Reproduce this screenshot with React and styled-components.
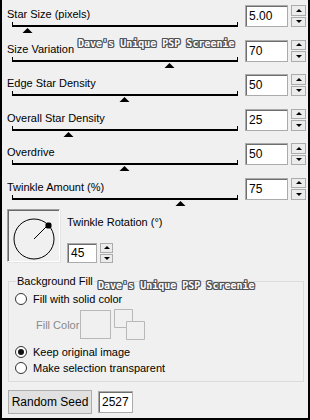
import styled, { createGlobalStyle } from 'styled-components'

const GlobalStyle = createGlobalStyle`
    body {
        margin: 0;
        background: #f0f0f0;
        font-family: "Liberation Sans", Arial, sans-serif;
        font-size: 11px;
        color: #000;
    }
`

const Frame = styled.div`
    position: relative;
    width: 310px;
    height: 420px;
    box-sizing: border-box;
    border: 2px solid #000;
    border-top: none;
    background: #f0f0f0;
    padding-top: 5px;
    overflow: hidden;
`

const SliderRow = styled.div`
    display: grid;
    grid-template-columns: 235px 43px 15px;
    column-gap: 3px;
    height: 34.5px;
    padding-left: 5px;
`

const LeftCol = styled.div`
    display: flex;
    flex-direction: column;
`

const Label = styled.div`
    line-height: 14px;
    margin-top: 2px;
    white-space: nowrap;
`

const Track = styled.div`
    position: relative;
    margin-left: 5px;
    margin-top: 1px;
    width: 224px;
    height: 3px;
    border-left: 1px solid #000;
    border-right: 1px solid #000;
    border-bottom: 2px solid #000;
`

const Thumb = styled.div`
    position: absolute;
    top: 6px;
    width: 0;
    height: 0;
    border-left: 5.5px solid transparent;
    border-right: 5.5px solid transparent;
    border-bottom: 5px solid #000;
    transform: translateX(-5.5px);
`

const NumBox = styled.div`
    box-sizing: border-box;
    width: ${p => p.$w || 43}px;
    height: ${p => p.$h || 22}px;
    background: #fff;
    border: 1px solid #ababab;
    box-shadow: inset 1px 1px 0 #6e6e6e;
    padding: 0 0 0 3px;
    display: flex;
    align-items: center;
    font-size: 12px;
`

const Spin = styled.div`
    display: flex;
    flex-direction: column;
    gap: 1px;
    width: ${p => p.$w || 15}px;
    height: ${p => p.$h || 22}px;
`

const SpinButton = styled.div`
    flex: 1;
    box-sizing: border-box;
    border: 1px solid #acacac;
    background: #ececec;
    display: flex;
    align-items: center;
    justify-content: center;
`

const Arrow = styled.div`
    width: 0;
    height: 0;
    border-left: 3.5px solid transparent;
    border-right: 3.5px solid transparent;
    ${p => p.$down ? 'border-top: 3.5px solid #000;' : 'border-bottom: 3.5px solid #000;'}
`

const Watermark = styled.div`
    position: absolute;
    left: ${p => p.$x}px;
    top: ${p => p.$y}px;
    font-family: "DejaVu Sans Mono", monospace;
    font-weight: bold;
    font-size: 10px;
    line-height: 12px;
    color: #fff;
    white-space: nowrap;
    text-shadow: 1px 0 0 #505050, -1px 0 0 #505050, 0 1px 0 #505050, 0 -1px 0 #505050,
        1px 1px 0 #505050, -1px -1px 0 #505050, 1px -1px 0 #505050, -1px 1px 0 #505050;
`

const RotationSection = styled.div`
    display: flex;
    gap: 7px;
    padding-left: 5px;
    margin-top: -3px;
`

const DialBox = styled.div`
    box-sizing: border-box;
    width: 53px;
    height: 53px;
    border: 1px solid #a0a0a0;
    border-right-color: #fff;
    border-bottom-color: #fff;
    box-shadow: inset 1px 1px 0 #696969, 1px 1px 0 #e3e3e3;
`

const RotationControls = styled.div`
    display: flex;
    flex-direction: column;
    padding-top: 4px;
`

const SmallRow = styled.div`
    display: flex;
    gap: 3px;
    margin-top: 14px;
`

const GroupBox = styled.div`
    position: relative;
    margin: 18px 4px 0 6px;
    border: 1px solid #dcdcdc;
    padding: 9px 0 5px 6px;
`

const Legend = styled.span`
    position: absolute;
    top: -8px;
    left: 7px;
    padding: 0 1px;
    background: #f0f0f0;
    line-height: 14px;
`

const RadioRow = styled.div`
    display: flex;
    align-items: center;
    gap: 6px;
    height: 16px;
    margin-top: ${p => p.$mt || 0}px;
`

const RadioCircle = styled.div`
    box-sizing: border-box;
    width: 12px;
    height: 12px;
    border-radius: 50%;
    border: 1px solid #333;
    background: #fff;
    display: flex;
    align-items: center;
    justify-content: center;
    &::after {
        content: "";
        display: ${p => p.$checked ? 'block' : 'none'};
        width: 6px;
        height: 6px;
        border-radius: 50%;
        background: #111;
    }
`

const FillRow = styled.div`
    display: flex;
    align-items: center;
    margin: 2px 0 0 21px;
    height: 31px;
`

const FillLabel = styled.span`
    color: #8a8a8a;
    width: 44px;
    white-space: nowrap;
`

const ColorSwatch = styled.div`
    box-sizing: border-box;
    width: 31px;
    height: 29px;
    border: 1px solid #b8b8b8;
`

const Footer = styled.div`
    display: flex;
    align-items: center;
    gap: 6px;
    margin: 8px 0 0 6px;
`

const Button = styled.div`
    box-sizing: border-box;
    width: 84px;
    height: 24px;
    border: 1px solid #adadad;
    background: #e1e1e1;
    display: flex;
    align-items: center;
    justify-content: center;
    font-size: 12px;
`

const sliders = [
    { label: 'Star Size (pixels)', value: '5.00', pos: 6.6 },
    { label: 'Size Variation', value: '70', pos: 70 },
    { label: 'Edge Star Density', value: '50', pos: 50 },
    { label: 'Overall Star Density', value: '25', pos: 25 },
    { label: 'Overdrive', value: '50', pos: 50 },
    { label: 'Twinkle Amount (%)', value: '75', pos: 75 },
]

const Spinner = ({ w, h }) => (
    <Spin $w={w} $h={h}>
        <SpinButton><Arrow /></SpinButton>
        <SpinButton><Arrow $down /></SpinButton>
    </Spin>
)

const App = () => {
    return (
        <>
            <GlobalStyle />
            <Frame>
                {sliders.map(s => (
                    <SliderRow key={s.label}>
                        <LeftCol>
                            <Label>{s.label}</Label>
                            <Track>
                                <Thumb style={{ left: `${s.pos}%` }} />
                            </Track>
                        </LeftCol>
                        <NumBox>{s.value}</NumBox>
                        <Spinner />
                    </SliderRow>
                ))}

                <RotationSection>
                    <DialBox>
                        <svg width="51" height="51" viewBox="0 0 51 51">
                            <circle cx="26" cy="29" r="20" fill="none" stroke="#000" strokeWidth="1" />
                            <line x1="26" y1="29" x2="40" y2="15" stroke="#000" strokeWidth="1" />
                            <rect x="37.5" y="12.5" width="6" height="6" rx="2" fill="#000" />
                        </svg>
                    </DialBox>
                    <RotationControls>
                        <Label>Twinkle Rotation (°)</Label>
                        <SmallRow>
                            <NumBox $w={30} $h={20}>45</NumBox>
                            <Spinner w={13} h={20} />
                        </SmallRow>
                    </RotationControls>
                </RotationSection>

                <GroupBox>
                    <Legend>Background Fill</Legend>
                    <RadioRow>
                        <RadioCircle />
                        <span>Fill with solid color</span>
                    </RadioRow>
                    <FillRow>
                        <FillLabel>Fill Color</FillLabel>
                        <ColorSwatch />
                        <svg width="32" height="31" viewBox="0 0 32 31" style={{ marginLeft: 3 }}>
                            <path d="M0.5 0.5 H18.5 V12.5 H30.5 V30.5 H12.5 V18.5 H0.5 Z" fill="none" stroke="#b8b8b8" />
                            <path d="M12.5 18.5 V12.5 H18.5" fill="none" stroke="#b8b8b8" />
                        </svg>
                    </FillRow>
                    <RadioRow $mt={4}>
                        <RadioCircle $checked />
                        <span>Keep original image</span>
                    </RadioRow>
                    <RadioRow>
                        <RadioCircle />
                        <span>Make selection transparent</span>
                    </RadioRow>
                </GroupBox>

                <Footer>
                    <Button>Random Seed</Button>
                    <NumBox $w={35} $h={22}>2527</NumBox>
                </Footer>

                <Watermark $x={76} $y={38}>Dave's Unique PSP Screenie</Watermark>
                <Watermark $x={96} $y={280}>Dave's Unique PSP Screenie</Watermark>
            </Frame>
        </>
    )
}

export default App
